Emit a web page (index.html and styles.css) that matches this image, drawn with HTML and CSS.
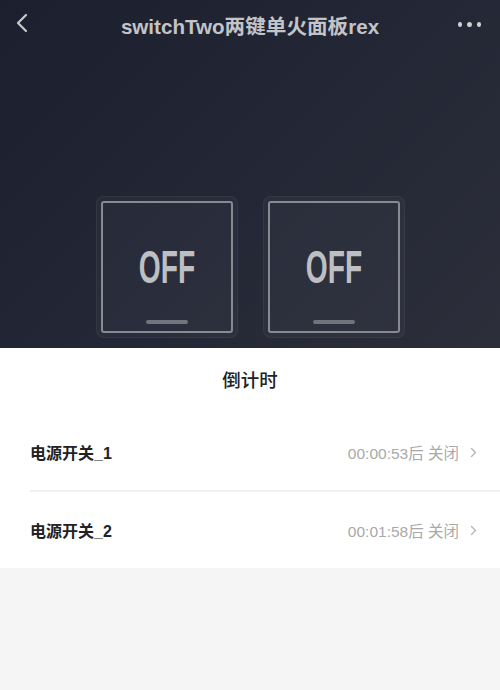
FILE: index.html
```html
<!DOCTYPE html>
<html lang="zh-CN">
<head>
  <meta charset="UTF-8" />
  <meta name="viewport" content="width=device-width, initial-scale=1.0" />
  <title>switchTwo两键单火面板rex</title>
  <link rel="stylesheet" href="styles.css">
</head>
<body>

  <!-- Device panel -->
  <div class="hero">
    <div class="nav">
      <button class="nav-back" aria-label="返回">
        <svg width="14" height="20" viewBox="0 0 14 20">
          <polyline points="11,2 3,10 11,18" fill="none" stroke="#c9cacd" stroke-width="2.2" stroke-linecap="round" stroke-linejoin="round" />
        </svg>
      </button>
      <div class="nav-title">switchTwo两键单火面板rex</div>
      <button class="nav-more" aria-label="更多">
        <span></span><span></span><span></span>
      </button>
    </div>

    <div class="switches">
      <div class="switch">
        <div class="switch-face">
          <div class="switch-label">OFF</div>
          <div class="switch-bar"></div>
        </div>
      </div>
      <div class="switch">
        <div class="switch-face">
          <div class="switch-label">OFF</div>
          <div class="switch-bar"></div>
        </div>
      </div>
    </div>
  </div>

  <!-- Countdown sheet -->
  <div class="sheet">
    <h2 class="sheet-title">倒计时</h2>
    <div class="row">
      <span class="row-name">电源开关_1</span>
      <span class="row-value">00:00:53后 关闭</span>
      <svg class="row-arrow" width="7" height="11" viewBox="0 0 7 11">
        <polyline points="1.5,1.5 5.5,5.5 1.5,9.5" fill="none" stroke="#b5b5b5" stroke-width="1.3" stroke-linecap="round" stroke-linejoin="round" />
      </svg>
    </div>
    <div class="row">
      <span class="row-name">电源开关_2</span>
      <span class="row-value">00:01:58后 关闭</span>
      <svg class="row-arrow" width="7" height="11" viewBox="0 0 7 11">
        <polyline points="1.5,1.5 5.5,5.5 1.5,9.5" fill="none" stroke="#b5b5b5" stroke-width="1.3" stroke-linecap="round" stroke-linejoin="round" />
      </svg>
    </div>
  </div>

</body>
</html>
```

FILE: styles.css
```css
body {
  margin: 0;
  padding: 0;
  background: #f5f5f5;
  font-family: "Liberation Sans", "Noto Sans CJK SC", sans-serif;
  min-height: 100vh;
}

.hero {
  height: 348px;
  background: linear-gradient(135deg, #1c1f2d 0%, #242735 55%, #2c2f3a 100%);
  display: flex;
  flex-direction: column;
}

.nav {
  height: 48px;
  display: flex;
  align-items: center;
  justify-content: space-between;
  padding: 0 12px 0 12px;
}

.nav-back,
.nav-more {
  background: none;
  border: none;
  padding: 0;
  cursor: pointer;
  display: flex;
  align-items: center;
}

.nav-back {
  width: 30px;
  height: 30px;
  padding-left: 3px;
  margin-top: -2px;
}

.nav-title {
  color: #c3c4c8;
  font-size: 20.6px;
  font-weight: bold;
  margin-top: 1px;
}

.nav-more {
  width: 30px;
  height: 30px;
  gap: 5px;
  justify-content: flex-end;
  padding-right: 7px;
}

.nav-more span {
  width: 5px;
  height: 5px;
  border-radius: 50%;
  background: #cfd0d4;
}

.switches {
  display: flex;
  justify-content: center;
  gap: 25px;
  margin-top: 148px;
}

.switch {
  width: 132px;
  height: 132px;
  padding: 4px;
  border: 1px solid rgba(255, 255, 255, 0.05);
  border-radius: 8px;
  background: rgba(255, 255, 255, 0.03);
}

.switch-face {
  box-sizing: border-box;
  width: 132px;
  height: 132px;
  border: 2px solid #878a91;
  border-radius: 3px;
  display: flex;
  flex-direction: column;
  align-items: center;
  padding-bottom: 7px;
}

.switch-label {
  margin-top: 40px;
  color: #bebfc3;
  font-size: 47px;
  line-height: 47px;
  font-weight: bold;
  transform: scaleX(0.6);
}

.switch-bar {
  margin-top: auto;
  width: 42px;
  height: 4px;
  border-radius: 2px;
  background: #70747c;
}

.sheet {
  background: #ffffff;
  height: 220px;
}

.sheet-title {
  margin: 0;
  height: 66px;
  line-height: 66px;
  text-align: center;
  font-size: 18.5px;
  font-weight: 500;
  color: #222222;
}

.row {
  height: 76px;
  margin-left: 30px;
  padding-right: 23px;
  display: flex;
  align-items: center;
}

.row + .row {
  border-top: 2px solid #f0f0f0;
  height: 76px;
}

.row-name {
  flex: 1;
  font-size: 16px;
  font-weight: 600;
  color: #222222;
}

.row-value {
  font-size: 15.5px;
  color: #a9a9a9;
}

.row-arrow {
  margin-left: 11px;
}
```
